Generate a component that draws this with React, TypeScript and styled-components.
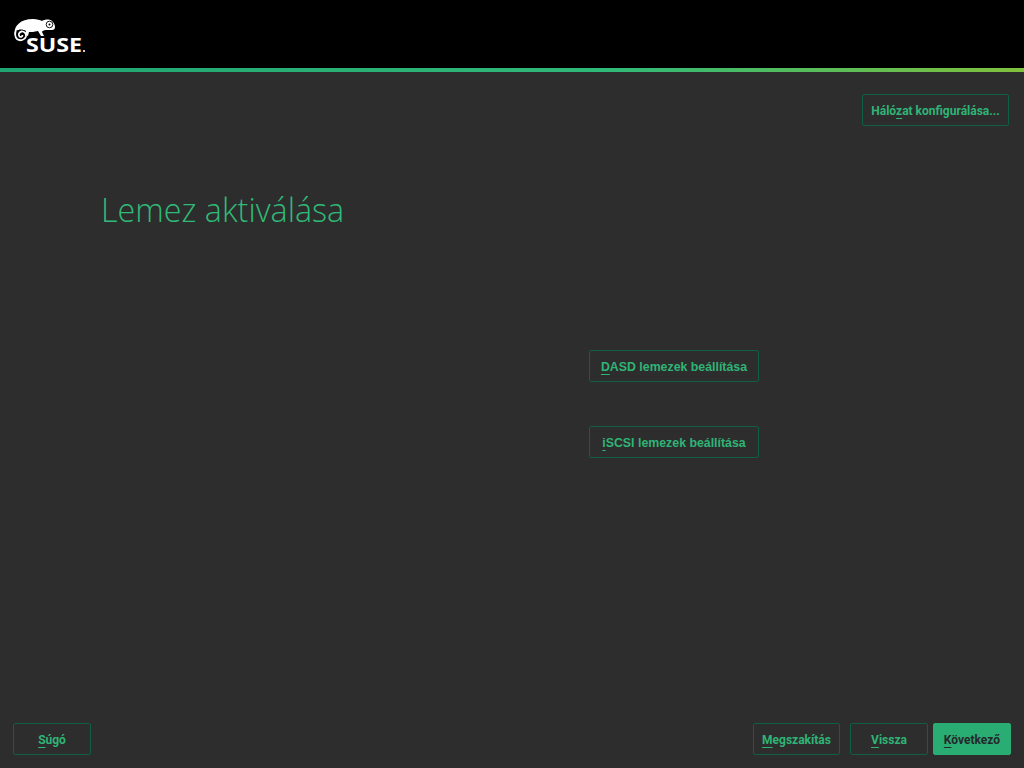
import React from 'react'
import styled, { createGlobalStyle } from 'styled-components'

const green = '#2fb476'

const GlobalStyle = createGlobalStyle`
  html, body {
    margin: 0;
    padding: 0;
    background: #2d2d2d;
  }
`

const Page = styled.div`
  width: 1024px;
  height: 768px;
  display: flex;
  flex-direction: column;
  background: #2d2d2d;
  overflow: hidden;
`

const Header = styled.header`
  height: 68px;
  flex: none;
  display: flex;
  align-items: flex-start;
  padding: 16px 0 0 12px;
  box-sizing: border-box;
  background: #000;
`

const Stripe = styled.div`
  height: 4px;
  flex: none;
  background: linear-gradient(to right, #1fa572 0%, #30ba78 60%, #81c13c 100%);
`

const TopBar = styled.div`
  flex: none;
  display: flex;
  justify-content: flex-end;
  padding: 22px 15px 0 0;
`

const Title = styled.h1`
  margin: 59px 0 0 101px;
  height: 50px;
  font-family: 'Open Sans', sans-serif;
  font-weight: 300;
  font-size: 32.3px;
  line-height: 48px;
  color: #30ba78;
`

const Content = styled.main`
  flex: 1;
  display: flex;
  flex-direction: column;
  gap: 44px;
  padding: 115px 0 0 589px;
`

const Footer = styled.footer`
  flex: none;
  display: flex;
  align-items: center;
  padding: 0 13px 13px;
`

const Spacer = styled.div`
  flex: 1;
`

const Button = styled.button<{ $w: number; $primary?: boolean; $arial?: boolean; $gap?: number }>`
  width: ${(p) => p.$w}px;
  height: 32px;
  box-sizing: border-box;
  margin-left: ${(p) => p.$gap ?? 0}px;
  padding: 2px 0 0;
  border: 1px solid ${(p) => (p.$primary ? '#2aad73' : '#0f5f43')};
  border-radius: 2px;
  background: ${(p) => (p.$primary ? '#2aad73' : 'transparent')};
  color: ${(p) => (p.$primary ? '#25282b' : green)};
  font-family: ${(p) => (p.$arial ? "'Liberation Sans', Arial" : 'Roboto')}, sans-serif;
  font-weight: 700;
  font-size: ${(p) => (p.$arial ? 12.35 : 12)}px;
  white-space: nowrap;
`

const Key = styled.span`
  text-decoration: underline;
  text-underline-offset: 3px;
`

const Logo = () => (
  <svg width="76" height="42" viewBox="12 16 76 42" aria-label="SUSE">
    <path
      fill="#fff"
      d="M14.500 33C14.500 26 20 19 33 19c4 0 7 1 9 2 3-2 8-2 10 0 2 2 3 4 3 6 0 2-1 3-3 3h-6c-2 0-4 1-4 2l2 4h-3l-3-5c-4 1-7 1-9 1l-1 4-3-1 1-4c-3-2-7-2-10 0z"
    />
    <path
      fill="none"
      stroke="#fff"
      strokeWidth="1.800"
      d="M16 31c-1.500 2-1 6 1 8 3 2.500 8 1 9-2.500.5-3-2-5.500-4.500-5-2.500.5-3.500 3.500-2 5 1.500 1 3 0 3-1.500"
    />
    <circle cx="49.500" cy="24.500" r="3.300" fill="none" stroke="#000" strokeWidth="0.900" />
    <circle cx="49.500" cy="24.500" r="1" fill="#000" />
    <text
      x="26"
      y="52"
      fill="#fff"
      fontFamily="'Open Sans', sans-serif"
      fontWeight="700"
      fontSize="19.500"
      textLength="56"
      lengthAdjust="spacingAndGlyphs"
    >
      SUSE
    </text>
    <circle cx="84" cy="51" r="1.100" fill="#fff" />
  </svg>
)

export default function App() {
  return (
    <Page>
      <GlobalStyle />
      <Header>
        <Logo />
      </Header>
      <Stripe />
      <TopBar>
        <Button $w={147}>
          Háló<Key>z</Key>at konfigurálása...
        </Button>
      </TopBar>
      <Title>Lemez aktiválása</Title>
      <Content>
        <Button $w={170} $arial>
          <Key>D</Key>ASD lemezek beállítása
        </Button>
        <Button $w={170} $arial>
          <Key>i</Key>SCSI lemezek beállítása
        </Button>
      </Content>
      <Footer>
        <Button $w={78}>
          <Key>S</Key>úgó
        </Button>
        <Spacer />
        <Button $w={87}>
          <Key>M</Key>egszakítás
        </Button>
        <Button $w={78} $gap={10}>
          <Key>V</Key>issza
        </Button>
        <Button $w={78} $gap={5} $primary>
          <Key>K</Key>övetkező
        </Button>
      </Footer>
    </Page>
  )
}
